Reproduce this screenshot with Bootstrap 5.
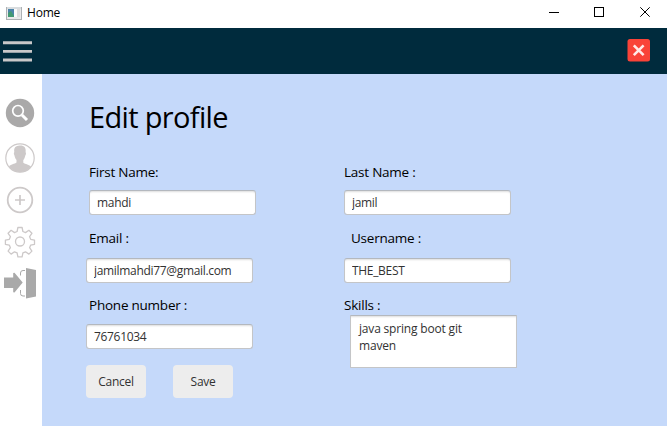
<!DOCTYPE html>
<html lang="en">
<head>
<meta charset="utf-8">
<meta name="viewport" content="width=device-width, initial-scale=1">
<title>Home</title>
<link href="https://cdn.jsdelivr.net/npm/bootstrap@5.3.0/dist/css/bootstrap.min.css" rel="stylesheet">
<style>
body{font-family:"Open Sans","Noto Sans",sans-serif;color:#000;height:426px}
svg{display:block;flex:none}
.titlebar{height:28px;padding-left:6px}
.titlebar .caption{font-size:12px;line-height:16px;margin-left:5px;margin-top:-2px;letter-spacing:-.2px}
.topbar{height:46px;background:#002b3d;padding:0 16px 0 3px}
.side{width:42px}
.main-pane{background:#c5d9fa;padding:22px 0 0 44px}
h1{font-size:29px;line-height:42px;height:66px;margin:0 0 0 3px;font-weight:400;letter-spacing:-.66px}
.form-col{width:258px}
.form-label{font-size:13.5px;line-height:20px;height:20px;margin:0;white-space:nowrap;letter-spacing:-.23px}
.form-control{width:167px;height:25px;min-height:0;padding:0 7px;font-size:12px;line-height:17px;letter-spacing:-.32px;color:#323232;border:1px solid #c4c5c7;border-top-color:#b4b8be;border-radius:3px;box-shadow:inset 0 2px 2px -1px #ddd;resize:none}
textarea.form-control{height:53px;padding:4px 30px 3px 8px;border-radius:1px;overflow:hidden;letter-spacing:-.18px}
.btn-flat{width:60px;height:33px;padding:0;font-size:12px;letter-spacing:-.3px;color:#323232;background:#ededed;border:0;border-radius:4px}
.nudge{margin-left:3px}
.nudge-6{margin-left:6px}
.nudge-7{margin-left:7px}
.row-two{margin-top:13px;margin-bottom:10px}
.row-three{margin-top:12px;margin-bottom:9px}
.row-skills{margin-top:12px}
.actions{gap:27px}
</style>
<script src="https://cdn.jsdelivr.net/npm/bootstrap@5.3.0/dist/js/bootstrap.bundle.min.js"></script>
</head>
<body class="d-flex flex-column overflow-hidden bg-white">
<header class="titlebar d-flex align-items-center flex-shrink-0">
  <svg width="16" height="14" viewBox="0 1 16 14"><rect x=".5" y=".5" width="15" height="13" fill="#e9e9ea" stroke="#adb1b4"/><path d="M1 2h14" stroke="#c9d0d4"/><rect x="2" y="3" width="6" height="8" fill="#4c84aa"/><path d="M2 11V7l3-2 3 5v1z" fill="#439a72"/><rect x="8" y="3" width="3" height="8" fill="#fafafa"/><rect x="11" y="3" width="3" height="8" fill="#dcdcdd"/></svg>
  <span class="caption">Home</span>
  <svg class="ms-auto" width="118" height="28" viewBox="549 0 118 28" fill="none" stroke="#000"><path d="M549 12.500h10"/><rect x="594.500" y="7.500" width="9" height="9"/><path d="M640.300 7.300l9.400 9.400m0-9.400l-9.400 9.400"/></svg>
</header>
<nav class="topbar d-flex align-items-center justify-content-between flex-shrink-0">
  <svg width="29" height="22" viewBox="0 0 29 22"><path d="M0 2.700h29M0 11.400h29M0 20h29" stroke="#c9c8c9" stroke-width="2.900"/></svg>
  <svg width="24" height="24" viewBox="0 0 24 24"><rect x=".5" y="0" width="22.500" height="22.500" rx="2.500" fill="#f94338"/><path d="M6.800 6.300l9.800 9.800M16.600 6.300L6.800 16.100" stroke="#ffe9e7" stroke-width="2.600"/></svg>
</nav>
<div class="d-flex flex-grow-1">
  <aside class="side flex-shrink-0">
    <svg width="42" height="352" viewBox="0 74 42 352">
      <circle cx="20" cy="113" r="14.200" fill="#aaa9a9"/>
      <circle cx="18" cy="110.800" r="5.300" fill="none" stroke="#fff" stroke-width="1.700"/><path d="M22 115l5 5" stroke="#fff" stroke-width="3"/>
      <g stroke="#cdc9c9" fill="none">
        <circle cx="20" cy="158" r="14.200" stroke-width="1.200"/>
        <path d="M9 166.500c1-2 6-2.600 7.500-4v-2.600c-1.500-1.300-1.700-3.400-2.200-4.800-.9-1.300-.2-2.300 0-3-.7-5.100 1.700-6.400 5.200-6.700 4.700-.3 6.800 2.200 6.100 6.800.9.700.2 2.700-.4 3.500-.3 1.700-.8 3.200-1.900 4.300v2.700c1.700 1.300 6.500 2 7.700 3.800-2.700 3.900-6.600 5.700-11 5.700s-8.300-1.800-11-5.700z" fill="#cdc9c9" stroke="none"/>
        <circle cx="20" cy="200" r="12.300" stroke-width="1.800"/>
        <path d="M15 200h10M20 195v10" stroke-width="1.700"/>
        <circle cx="20" cy="241.500" r="4.500" stroke-width="1.300"/>
        <path stroke-width="1.300" stroke-linejoin="round" d="M17.900 227.500h4.200l.8 4 2.600 1.100 3.400-2.300 3 3-2.300 3.400 1.100 2.600 3.800.8v4.200l-3.800.8-1.100 2.600 2.300 3.400-3 3-3.400-2.300-2.600 1.100-.8 4h-4.200l-.8-4-2.600-1.100-3.400 2.300-3-3 2.300-3.400-1.100-2.600-3.900-.8v-4.200l3.900-.8 1.100-2.600-2.300-3.400 3-3 3.400 2.300 2.600-1.100z"/>
      </g>
      <path d="M26 268l10 2v26.500l-10 2zM4 277.500h9.200V273l1.300-.3 8.200 9.900-8.200 10-1.300-.3V288H4z" fill="#a9a9a9"/>
      <path d="M20.500 275.500v-2.500q0-2.500 2.500-2.500h2M20.500 290v3.500q0 2.500 2.500 2.500h2" stroke="#a9a9a9" fill="none"/>
    </svg>
  </aside>
  <main class="main-pane flex-grow-1">
    <h1>Edit profile</h1>
    <form class="d-flex">
      <div class="form-col">
        <div class="mb-2 d-flex nudge"><label class="form-label" for="first">First Name:</label></div>
        <input id="first" class="form-control nudge" value="mahdi">
        <div class="d-flex nudge row-two"><label class="form-label" for="email">Email :</label></div>
        <input id="email" class="form-control" value="jamilmahdi77@gmail.com">
        <div class="d-flex nudge row-three"><label class="form-label" for="phone">Phone number :</label></div>
        <input id="phone" class="form-control" value="76761034">
        <div class="d-flex mt-3 actions"><button type="button" class="btn btn-flat">Cancel</button><button type="button" class="btn btn-flat">Save</button></div>
      </div>
      <div class="form-col">
        <div class="mb-2 d-flex"><label class="form-label" for="last">Last Name :</label></div>
        <input id="last" class="form-control" value="jamil">
        <div class="d-flex nudge-7 row-two"><label class="form-label" for="user">Username :</label></div>
        <input id="user" class="form-control" value="THE_BEST">
        <div class="d-flex row-skills"><label class="form-label" for="skills">Skills :</label></div>
        <textarea id="skills" class="form-control nudge-6">java spring boot git maven</textarea>
      </div>
    </form>
  </main>
</div>
</body>
</html>
